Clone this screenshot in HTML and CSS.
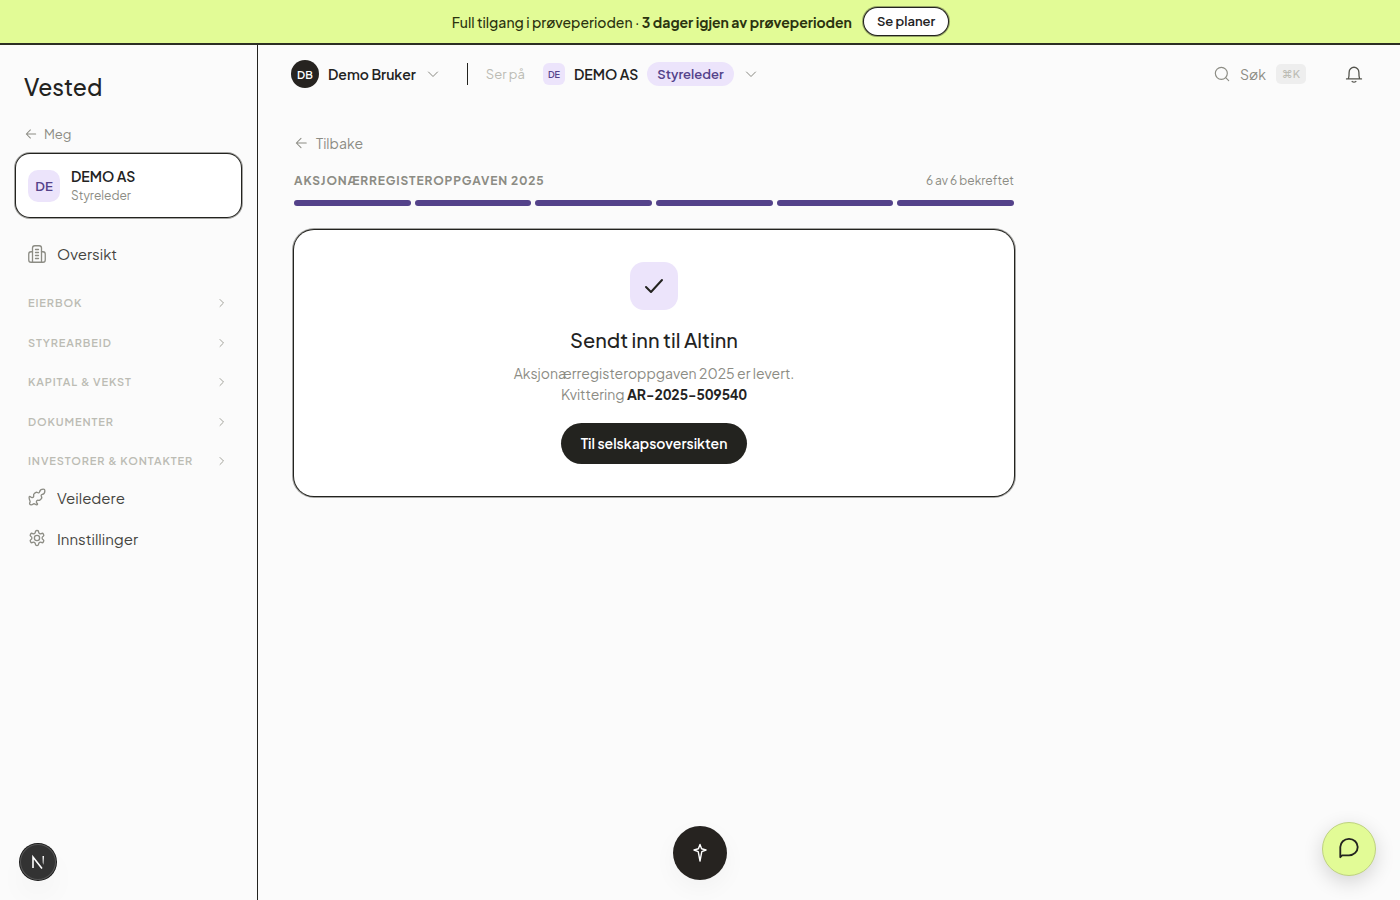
FILE: index.html
```html
<!DOCTYPE html>
<html lang="no">
<head>
    <meta charset="UTF-8">
    <meta name="viewport" content="width=device-width, initial-scale=1.0">
    <title>Vested</title>
    <link rel="stylesheet" href="styles.css">
</head>
<body>
<div class="trial-banner">
    <span>Full tilgang i prøveperioden · <strong>3 dager igjen av prøveperioden</strong></span>
    <a class="plans-link" href="#">Se planer</a>
</div>

<div class="layout">
    <aside class="sidebar">
        <a class="logo" href="#">Vested</a>
        <a class="back-me" href="#">
            <svg class="icon" width="14" height="14" viewBox="0 0 24 24"><path d="M20 12H4M11 5l-7 7 7 7"/></svg>
            Meg
        </a>
        <a class="company-card" href="#">
            <span class="avatar avatar-lg">DE</span>
            <span class="company-info">
                <span class="company-name">DEMO AS</span>
                <span class="company-role">Styreleder</span>
            </span>
        </a>
        <nav class="nav">
            <a class="nav-item" href="#">
                <svg class="icon" width="18" height="18" viewBox="0 0 24 24"><path d="M6 23V4a3 3 0 0 1 3-3h6a3 3 0 0 1 3 3v19"/><path d="M6 9H4a3 3 0 0 0-3 3v8a3 3 0 0 0 3 3h16a3 3 0 0 0 3-3v-8a3 3 0 0 0-3-3h-2M10 6h4M10 10h4M10 14h4M10 18h4"/></svg>
                Oversikt
            </a>
            <div class="nav-groups">
                <button class="nav-group">EIERBOK <svg class="icon" width="12" height="12" viewBox="0 0 24 24"><path d="M8 5l7 7-7 7"/></svg></button>
                <button class="nav-group">STYREARBEID <svg class="icon" width="12" height="12" viewBox="0 0 24 24"><path d="M8 5l7 7-7 7"/></svg></button>
                <button class="nav-group">KAPITAL &amp; VEKST <svg class="icon" width="12" height="12" viewBox="0 0 24 24"><path d="M8 5l7 7-7 7"/></svg></button>
                <button class="nav-group">DOKUMENTER <svg class="icon" width="12" height="12" viewBox="0 0 24 24"><path d="M8 5l7 7-7 7"/></svg></button>
                <button class="nav-group">INVESTORER &amp; KONTAKTER <svg class="icon" width="12" height="12" viewBox="0 0 24 24"><path d="M8 5l7 7-7 7"/></svg></button>
            </div>
            <a class="nav-item" href="#">
                <svg class="icon" width="18" height="18" viewBox="0 0 24 24"><path d="M1.500 12.500c0-1.500 1.200-1.600 2-.6 1 1.200 3.200 1.400 4-.4.600-1.400-.6-2 .3-3.200C9 6.500 11 5 12.500 6c1.300.9 2.800.4 3-1C16 2.500 18 1.500 20.500 1.500c1.500 0 2 .6 2 2 0 2.500-1 4.500-3.500 5-1.400.3-2 1.700-1 3 1 1.500-.5 3.500-2.300 4.700-1.200.9-1.800-.3-3.200.3-1.800.8-1.600 3-.4 4 1 .8.900 2-.6 2-1.500 0-2-1.500-3.500-1.500S6.500 22.500 4.500 22.500c-2.500 0-3-2-1.800-3.500 1-1.200-1.200-2.500-1.200-6.500z"/></svg>
                Veiledere
            </a>
            <a class="nav-item" href="#">
                <svg class="icon" width="18" height="18" viewBox="0 0 24 24"><path d="M12.220 2h-.440a2 2 0 0 0-2 2v.180a2 2 0 0 1-1 1.730l-.430.250a2 2 0 0 1-2 0l-.150-.080a2 2 0 0 0-2.730.730l-.220.380a2 2 0 0 0 .730 2.730l.150.100a2 2 0 0 1 1 1.720v.510a2 2 0 0 1-1 1.740l-.150.090a2 2 0 0 0-.730 2.730l.220.380a2 2 0 0 0 2.730.730l.150-.080a2 2 0 0 1 2 0l.430.250a2 2 0 0 1 1 1.730V20a2 2 0 0 0 2 2h.440a2 2 0 0 0 2-2v-.180a2 2 0 0 1 1-1.730l.430-.250a2 2 0 0 1 2 0l.150.080a2 2 0 0 0 2.730-.730l.220-.390a2 2 0 0 0-.730-2.730l-.150-.080a2 2 0 0 1-1-1.740v-.500a2 2 0 0 1 1-1.740l.150-.090a2 2 0 0 0 .730-2.730l-.220-.380a2 2 0 0 0-2.730-.730l-.150.080a2 2 0 0 1-2 0l-.430-.250a2 2 0 0 1-1-1.730V4a2 2 0 0 0-2-2z"/><circle cx="12" cy="12" r="3.500"/></svg>
                Innstillinger
            </a>
        </nav>
    </aside>

    <div class="content">
        <header class="topbar">
            <button class="user-menu">
                <span class="avatar avatar-user">DB</span>
                Demo Bruker
                <svg class="icon chevron" width="12" height="12" viewBox="0 0 24 24"><path d="M3 8l9 9 9-9"/></svg>
            </button>
            <span class="divider"></span>
            <span class="viewing-as">Ser på</span>
            <button class="company-menu">
                <span class="avatar avatar-sm">DE</span>
                DEMO AS
                <span class="role-pill">Styreleder</span>
                <svg class="icon chevron" width="12" height="12" viewBox="0 0 24 24"><path d="M3 8l9 9 9-9"/></svg>
            </button>
            <button class="search">
                <svg class="icon" width="16" height="16" viewBox="0 0 24 24"><circle cx="11" cy="11" r="9"/><path d="M17.500 17.500L22 22"/></svg>
                Søk
                <kbd>⌘K</kbd>
            </button>
            <button class="bell" aria-label="Varsler">
                <svg class="icon" width="18" height="18" viewBox="0 0 24 24"><path d="M2 18.500h20M4.500 18.500c.8-2 1-4 1-9a6.500 6.500 0 0 1 13 0c0 5 .2 7 1 9M9.500 22c1.500 1 3.500 1 5 0"/></svg>
            </button>
        </header>

        <main class="page">
            <a class="back-link" href="#">
                <svg class="icon" width="14" height="14" viewBox="0 0 24 24"><path d="M21 12H4M12 4l-8 8 8 8"/></svg>
                Tilbake
            </a>
            <div class="step-header">
                <h1>AKSJONÆRREGISTEROPPGAVEN 2025</h1>
                <span>6 av 6 bekreftet</span>
            </div>
            <div class="steps">
                <span></span><span></span><span></span><span></span><span></span><span></span>
            </div>
            <section class="receipt">
                <div class="receipt-icon">
                    <svg class="icon" width="24" height="24" viewBox="0 0 24 24"><path d="M4 13l5 5L20 6"/></svg>
                </div>
                <h2>Sendt inn til Altinn</h2>
                <p>Aksjonærregisteroppgaven 2025 er levert.<br>Kvittering <strong>AR-2025-509540</strong></p>
                <button class="primary-button">Til selskapsoversikten</button>
            </section>
        </main>
    </div>
</div>

<button class="dev-button" aria-label="Utviklerverktøy">
    <svg width="36" height="36" viewBox="0 0 36 36" fill="none">
        <defs>
            <linearGradient id="fade" x1="0" y1="12" x2="0" y2="24" gradientUnits="userSpaceOnUse">
                <stop stop-color="#fff"/>
                <stop offset="1" stop-color="#fff" stop-opacity="0.1"/>
            </linearGradient>
        </defs>
        <path d="M13 24V13l9 11.500" stroke="#fff" stroke-width="1.600"/>
        <path d="M22.500 12h1.500v9l-1.500-2z" fill="url(#fade)"/>
    </svg>
</button>
<button class="assistant-button" aria-label="Assistent">
    <svg width="20" height="20" viewBox="0 0 20 20" fill="none" stroke="#fff" stroke-width="1.400" stroke-linejoin="round"><path d="M10 1.500l1.600 4.300L16 7l-4.200 1.600L10 18 8.200 8.600 4 7l4.400-1.200z"/></svg>
</button>
<button class="chat-button" aria-label="Chat">
    <svg class="icon" width="22" height="22" viewBox="0 0 24 24"><path d="M2.500 22V11a9.500 9 0 1 1 9.500 9H4.500z"/></svg>
</button>
</body>
</html>
```
FILE: styles.css
```css
* {
    box-sizing: border-box;
}

body {
    margin: 0;
    min-height: 100vh;
    display: flex;
    flex-direction: column;
    font-family: "Plus Jakarta Sans", Inter, sans-serif;
    font-size: 14px;
    color: #23231f;
    background-color: #fbfbfb;
}

a {
    color: inherit;
    text-decoration: none;
}

button {
    font: inherit;
    color: inherit;
    background: none;
    border: none;
    padding: 0;
    cursor: pointer;
}

.icon {
    flex-shrink: 0;
    fill: none;
    stroke: currentColor;
    stroke-width: 1.75;
    stroke-linecap: round;
    stroke-linejoin: round;
}

.trial-banner {
    display: flex;
    align-items: center;
    justify-content: center;
    gap: 12px;
    height: 45px;
    font-size: 14px;
    font-weight: 500;
    color: #2b330f;
    background-color: #e2fb96;
    border-bottom: 2px solid #2c2f24;
}

.trial-banner strong {
    font-weight: 700;
}

.plans-link {
    padding: 5px 13px;
    font-size: 13px;
    line-height: 17px;
    font-weight: 600;
    color: #23231f;
    background-color: #fff;
    border-radius: 999px;
    box-shadow: 0 0 0 1px #23231f, 0 0 0 2px rgba(35, 35, 31, 0.4);
}

.layout {
    flex: 1;
    display: flex;
}

.sidebar {
    width: 258px;
    flex-shrink: 0;
    padding: 26px 16px;
    border-right: 1px solid #23231f;
}

.logo {
    display: block;
    padding-left: 8px;
    font-size: 23px;
    line-height: 32px;
    font-weight: 500;
}

.back-me {
    display: flex;
    align-items: center;
    gap: 6px;
    margin-top: 21px;
    padding-left: 8px;
    font-size: 13px;
    line-height: 20px;
    color: #8c8c84;
}

.company-card {
    display: flex;
    align-items: center;
    gap: 11px;
    height: 63px;
    margin-top: 10px;
    padding: 0 12px;
    background-color: #fff;
    border-radius: 14px;
    box-shadow: 0 0 0 1px #23231f, 0 0 0 2px rgba(35, 35, 31, 0.4);
}

.avatar {
    display: flex;
    align-items: center;
    justify-content: center;
    font-weight: 600;
    color: #54428a;
    background-color: #ece4fb;
}

.avatar-lg {
    width: 32px;
    height: 32px;
    font-size: 13px;
    border-radius: 10px;
}

.avatar-sm {
    width: 22px;
    height: 22px;
    font-size: 9px;
    border-radius: 6px;
}

.avatar-user {
    width: 28px;
    height: 28px;
    font-size: 11px;
    color: #fff;
    background-color: #262320;
    border-radius: 50%;
}

.company-info {
    display: flex;
    flex-direction: column;
}

.company-name {
    font-size: 14px;
    line-height: 20px;
    font-weight: 600;
}

.company-role {
    font-size: 12px;
    line-height: 20px;
    color: #8c8c84;
}

.nav {
    margin-top: 16px;
}

.nav-item {
    display: flex;
    align-items: center;
    gap: 11px;
    height: 41px;
    padding-left: 12px;
    font-size: 15px;
    color: #45453f;
}

.nav-item .icon {
    color: #8c8c84;
}

.nav-groups {
    display: flex;
    flex-direction: column;
    gap: 23px;
    margin-top: 21px;
    margin-bottom: 7px;
}

.nav-group {
    display: flex;
    align-items: center;
    justify-content: space-between;
    padding: 0 13px 0 12px;
    font-size: 11px;
    line-height: 1.5;
    font-weight: 600;
    letter-spacing: 0.08em;
    color: #bcbcb4;
}

.nav-group .icon {
    color: #a3a39b;
    stroke-width: 2;
}

.content {
    flex: 1;
    min-width: 0;
}

.topbar {
    display: flex;
    align-items: center;
    height: 58px;
    padding: 0 37px 0 33px;
}

.user-menu,
.company-menu {
    display: flex;
    align-items: center;
    gap: 9px;
    font-size: 14px;
    font-weight: 600;
}

.chevron {
    margin-left: 2px;
    color: #77776f;
}

.divider {
    width: 1px;
    height: 22px;
    margin: 0 18px 0 28px;
    background-color: #23231f;
}

.viewing-as {
    margin-right: 18px;
    font-size: 13px;
    color: #bcbcb4;
}

.role-pill {
    padding: 0 10px;
    font-size: 13px;
    line-height: 24px;
    font-weight: 600;
    color: #54428a;
    background-color: #ece4fb;
    border-radius: 999px;
}

.search {
    display: flex;
    align-items: center;
    gap: 10px;
    margin-left: auto;
    font-size: 14px;
    color: #8c8c84;
}

.search kbd {
    padding: 0 6px;
    font-family: inherit;
    font-size: 11px;
    line-height: 20px;
    font-weight: 500;
    color: #bcbcb4;
    background-color: #eee;
    border-radius: 5px;
}

.bell {
    display: flex;
    margin-left: 39px;
    color: #55554e;
}

.page {
    max-width: 792px;
    padding: 30px 36px;
}

.back-link {
    display: inline-flex;
    align-items: center;
    gap: 8px;
    font-size: 14px;
    line-height: 20px;
    color: #8c8c84;
}

.step-header {
    display: flex;
    align-items: center;
    justify-content: space-between;
    margin-top: 18px;
    font-size: 12px;
    line-height: 20px;
    color: #8c8c84;
}

.step-header h1 {
    margin: 0;
    font-size: 12px;
    font-weight: 700;
    letter-spacing: 0.07em;
}

.steps {
    display: flex;
    gap: 4px;
    margin-top: 9px;
}

.steps span {
    flex: 1;
    height: 6px;
    background-color: #54428a;
    border-radius: 3px;
}

.receipt {
    display: flex;
    flex-direction: column;
    align-items: center;
    margin-top: 24px;
    padding: 32px;
    text-align: center;
    background-color: #fff;
    border-radius: 20px;
    box-shadow: 0 0 0 1px #23231f, 0 0 0 2px rgba(35, 35, 31, 0.4);
}

.receipt-icon {
    display: flex;
    align-items: center;
    justify-content: center;
    width: 48px;
    height: 48px;
    background-color: #ece4fb;
    border-radius: 14px;
}

.receipt-icon .icon {
    stroke-width: 2;
}

.receipt h2 {
    margin: 16px 0 0;
    font-size: 20px;
    line-height: 28px;
    font-weight: 500;
}

.receipt p {
    margin: 9px 0 18px;
    font-size: 14px;
    line-height: 21px;
    color: #8c8c84;
}

.receipt p strong {
    font-weight: 700;
    font-variant-numeric: tabular-nums;
    color: #23231f;
}

.primary-button {
    padding: 0 20px;
    font-size: 14px;
    line-height: 41px;
    font-weight: 600;
    color: #fff;
    background-color: #23231f;
    border-radius: 999px;
}

/* floating buttons */
.dev-button,
.assistant-button,
.chat-button {
    position: fixed;
    display: flex;
    align-items: center;
    justify-content: center;
    border-radius: 50%;
}

.dev-button {
    left: 20px;
    bottom: 20px;
    width: 36px;
    height: 36px;
    background-color: #333;
    box-shadow: inset 0 0 0 1px #555, 0 0 0 1px #171717, 0 16px 32px -8px rgba(0, 0, 0, 0.1);
}

.assistant-button {
    left: 50%;
    bottom: 20px;
    width: 54px;
    height: 54px;
    margin-left: -27px;
    background-color: #262320;
    box-shadow: 0 8px 24px rgba(0, 0, 0, 0.04);
}

.chat-button {
    right: 24px;
    bottom: 24px;
    width: 54px;
    height: 54px;
    padding-bottom: 3px;
    background-color: #e2fb96;
    border: 1px solid #bdd17f;
    box-shadow: 0 6px 20px rgba(0, 0, 0, 0.16);
}

.chat-button .icon {
    stroke-width: 2;
}
```
